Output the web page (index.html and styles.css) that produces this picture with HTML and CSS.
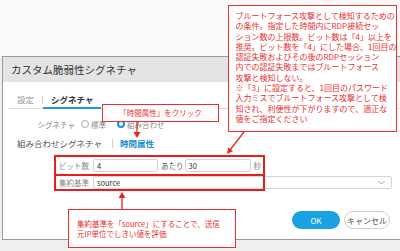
FILE: index.html
```html
<!DOCTYPE html>
<html lang="ja">
<head>
    <meta charset="UTF-8">
    <meta name="viewport" content="width=device-width, initial-scale=1.0">
    <link rel="stylesheet" href="styles.css">
    <title>カスタム脆弱性シグネチャ</title>
</head>
<body>
    <div class="top"></div>

    <div class="dialog">
        <div class="dialog-head">カスタム脆弱性シグネチャ</div>

        <div class="tabs">
            <span class="tab">設定</span>
            <span class="tab-sep"></span>
            <span class="tab active">シグネチャ</span>
        </div>

        <div class="radio-row">
            <span class="radio-label">シグネチャ</span>
            <span class="radio"></span>
            <span class="radio-text">標準</span>
            <span class="radio checked"></span>
            <span class="radio-text">組み合わせ</span>
        </div>

        <div class="subtabs">
            <span>組み合わせシグネチャ</span>
            <span class="subtab-sep"></span>
            <span class="subtab-active">時間属性</span>
        </div>

        <div class="form">
            <div class="form-row">
                <span class="form-label">ビット数</span>
                <span class="input input-count">4</span>
                <span class="unit">あたり</span>
                <span class="input input-sec">30</span>
                <span class="unit unit-gray">秒</span>
            </div>
            <div class="form-row row-select">
                <span class="form-label">集約基準</span>
                <span class="select">
                    source
                    <svg class="chevron" width="7" height="5" viewBox="0 0 7 5"><path d="M0.5 1 L3.5 4 L6.5 1" fill="none" stroke="#999" stroke-width="0.9"/></svg>
                </span>
            </div>
        </div>

        <div class="actions">
            <button class="btn-ok">OK</button>
            <button class="btn-cancel">キャンセル</button>
        </div>
    </div>

    <!-- 注釈 -->
    <div class="mark mark-count"></div>
    <div class="mark mark-source"></div>

    <div class="note note-click">「時間属性」をクリック</div>
    <div class="note note-count">ブルートフォース攻撃として検知するための<br>の条件。指定した時間内にRDP接続セッ<br>ション数の上限数。ビット数は「4」以上を<br>推奨。ビット数を「4」にした場合、1回目の<br>認証失敗およびその後のRDPセッション<br>内での認証失敗まではブルートフォース<br>攻撃と検知しない。<br>※「3」に設定すると、1回目のパスワード<br>入力ミスでブルートフォース攻撃として検<br>知され、利便性が下がりますので、適正な<br>値をご指定ください</div>
    <div class="note note-source">集約基準を「source」にすることで、送信<br>元IP単位でしきい値を評価</div>

    <svg class="arrows" width="400" height="251" viewBox="0 0 400 251">
        <g stroke="#e62525" stroke-width="1.3" fill="none">
            <line x1="137" y1="122" x2="137" y2="133"/>
            <line x1="244" y1="132" x2="230" y2="150"/>
            <line x1="122" y1="209" x2="122" y2="197"/>
        </g>
        <g fill="#e62525">
            <polygon points="133.5,132 140.5,132 137,138"/>
            <polygon points="233,151 228.2,147.4 227,154"/>
            <polygon points="118.5,198 125.5,198 122,192"/>
        </g>
    </svg>
</body>
</html>
```

FILE: styles.css
```css
body {
    margin: 0;
    width: 400px;
    height: 251px;
    overflow: hidden;
    position: relative;
    background-color: #efefef; /* ダイアログ下の背景 */
    font-family: "Noto Sans CJK JP", "Liberation Sans", sans-serif;
    color: #333;
}
.top {
    height: 56px;
    background-color: #f9f9f9;
}
.dialog {
    margin-left: 2px;
    width: 397px;
    background-color: #fff;
    border: 1px solid #9a9a9a;
    border-right: none;
}
.dialog-head {
    height: 25px;
    line-height: 25px;
    padding-left: 8px;
    background-color: #e4e4e4;
    font-size: 10.5px;
    color: #333;
}

/* タブ */
.tabs {
    display: flex;
    align-items: flex-start;
    margin-left: 6px;
    padding-top: 10px;
    border-bottom: 1px solid #dcdcdc;
}
.tab {
    font-size: 8.5px;
    line-height: 14px;
    padding: 0 8px 1px;
    border-bottom: 2px solid transparent;
    margin-bottom: -1px;
    color: #999;
}
.tab.active {
    color: #333;
    font-weight: bold;
    border-bottom-color: #1c9be0;
}
.tab-sep {
    width: 1px;
    height: 8px;
    margin-top: 4px;
    background-color: #ccc;
}

/* ラジオ */
.radio-row {
    display: flex;
    align-items: center;
    margin-top: 9px;
    height: 12px;
    font-size: 7.5px;
    color: #888;
}
.radio-label {
    width: 72px;
    text-align: right;
    margin-right: 6px;
}
.radio {
    box-sizing: border-box;
    width: 8px;
    height: 8px;
    border: 1px solid #aaa;
    border-radius: 50%;
    margin-right: 2px;
}
.radio.checked {
    border: 2.5px solid #1c8fe0;
    background-color: #fff;
}
.radio-text {
    margin-right: 11px;
}

/* サブタブ */
.subtabs {
    display: flex;
    align-items: center;
    margin-top: 7px;
    padding-left: 14px;
    height: 12px;
    font-size: 8.5px;
    color: #555;
}
.subtab-sep {
    width: 1px;
    height: 9px;
    margin: 0 7px 0 10px;
    background-color: #d0d0d0;
}
.subtab-active {
    color: #1a8ed2;
    font-weight: bold;
}

/* フォーム */
.form {
    margin-top: 10px;
    padding-left: 53px;
}
.form-row {
    display: flex;
    align-items: center;
    height: 13px;
    font-size: 7.5px;
}
.row-select {
    margin-top: 4px;
}
.form-label {
    box-sizing: border-box;
    width: 37px;
    padding-left: 3px;
    color: #888;
}
.input, .select {
    box-sizing: border-box;
    height: 13px;
    line-height: 11px;
    padding-left: 3px;
    border: 1px solid #d4d4d4;
    border-radius: 2px;
    color: #333;
}
.input-count {
    width: 65px;
    margin-right: 3px;
}
.input-sec {
    width: 66px;
    margin-right: 3px;
}
.unit {
    margin-right: 1px;
    color: #555;
}
.unit-gray {
    color: #888;
}
.select {
    position: relative;
    width: 299px;
}
.chevron {
    position: absolute;
    right: 6px;
    top: 3px;
}

/* ボタン */
.actions {
    display: flex;
    gap: 4px;
    margin-top: 22px;
    padding-left: 289px;
    padding-bottom: 10px;
}
.btn-ok, .btn-cancel {
    box-sizing: border-box;
    height: 18px;
    border-radius: 9px;
    font-family: inherit;
    font-size: 8px;
    padding: 0;
}
.btn-ok {
    width: 48px;
    border: none;
    background-color: #1ba1e2;
    color: #fff;
}
.btn-cancel {
    width: 46px;
    border: 1px solid #cfcfcf;
    background-color: #fff;
    color: #555;
}

/* 注釈 */
.mark {
    position: absolute;
    left: 54px;
    width: 211px;
    box-sizing: border-box;
    border: 2px solid #e81e1e;
}
.mark-count {
    top: 155px;
    height: 21px;
}
.mark-source {
    top: 174px;
    height: 17px;
}
.note {
    position: absolute;
    box-sizing: border-box;
    background-color: #fff;
    border: 1.5px solid #e83030;
    color: #e83030;
    white-space: nowrap;
}
.note-click {
    left: 102px;
    top: 104px;
    width: 117px;
    height: 18px;
    line-height: 15px;
    text-align: center;
    font-size: 7.5px;
}
.note-count {
    left: 228px;
    top: 5px;
    width: 169px;
    height: 127px;
    padding: 5px 0 0 6.5px;
    font-size: 8px;
    line-height: 10.3px;
}
.note-source {
    left: 68px;
    top: 209px;
    width: 168px;
    height: 39px;
    padding: 9px 0 0 8px;
    font-size: 7.5px;
    line-height: 10px;
}
.arrows {
    position: absolute;
    left: 0;
    top: 0;
}
```
